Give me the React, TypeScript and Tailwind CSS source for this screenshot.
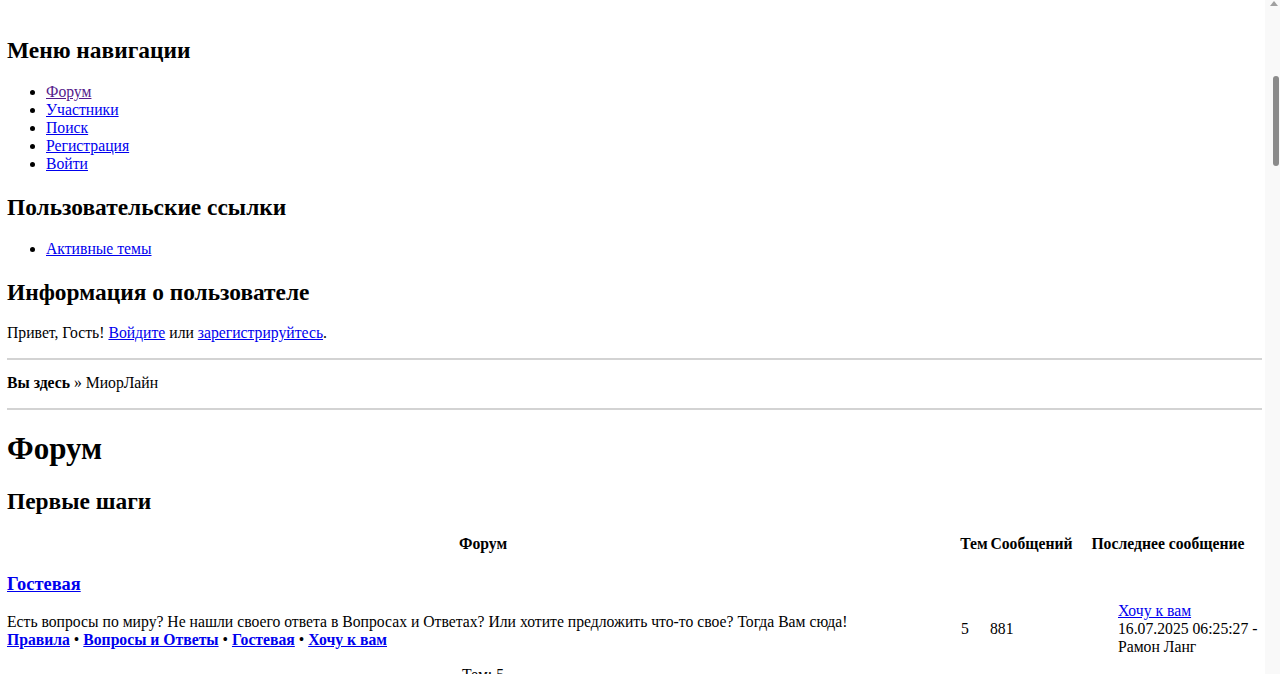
const link = "text-[#0000ee] underline"

const navLinks = [
    { label: "Форум", visited: true },
    { label: "Участники" },
    { label: "Поиск" },
    { label: "Регистрация" },
    { label: "Войти" },
]

const subForums = ["Правила", "Вопросы и Ответы", "Гостевая", "Хочу к вам"]

const heading = "text-[23.4px] leading-[27px] font-bold"

// browser scrollbar as it looks in the screenshot
const FakeScrollbar = () => (
    <div aria-hidden className="fixed top-0 right-0 w-[15px] h-full bg-[#f9f9f9]">
        <div className="absolute top-[1px] right-[2px] w-0 h-0 border-l-[4px] border-r-[4px] border-b-[5px] border-l-transparent border-r-transparent border-b-[#a0a0a0]" />
        <div className="absolute top-[76px] right-[1px] w-[6px] h-[90px] rounded-full bg-[#8b8b8b]" />
    </div>
)

export default function App() {
    return (
        <div className="font-['Liberation_Serif','Times_New_Roman',serif] text-[15.7px] leading-[18px] text-black bg-white pl-[7px] pr-[18px] pt-[37px]">
            <h2 className={`${heading} mb-[19px]`}>Меню навигации</h2>
            <ul className="list-disc pl-[39px] mb-[21px]">
                {navLinks.map((item) => (
                    <li key={item.label}>
                        <a href="#" className={item.visited ? "text-[#551a8b] underline" : link}>{item.label}</a>
                    </li>
                ))}
            </ul>

            <h2 className={`${heading} mb-[19px]`}>Пользовательские ссылки</h2>
            <ul className="list-disc pl-[39px] mb-[21px]">
                <li><a href="#" className={link}>Активные темы</a></li>
            </ul>

            <h2 className={`${heading} mb-[18px]`}>Информация о пользователе</h2>
            <p>
                Привет, Гость! <a href="#" className={link}>Войдите</a> или <a href="#" className={link}>зарегистрируйтесь</a>.
            </p>

            <div className="h-[2px] bg-[#d3d3d3] mt-4 mb-[14px]" />
            <p><strong>Вы здесь</strong> » МиорЛайн</p>
            <div className="h-[2px] bg-[#d3d3d3] mt-4" />

            <h1 className="text-[31px] leading-[36px] font-bold mt-[21px] mb-[21px]">Форум</h1>
            <h2 className={`${heading} mb-[20px]`}>Первые шаги</h2>

            <table className="w-full table-fixed border-collapse">
                <colgroup>
                    <col />
                    <col className="w-[30px]" />
                    <col className="w-[85px]" />
                    <col className="w-[188px]" />
                </colgroup>
                <thead>
                    <tr>
                        <th className="font-bold text-center p-0">Форум</th>
                        <th className="font-bold text-center p-0">Тем</th>
                        <th className="font-bold text-center p-0 whitespace-nowrap">Сообщений</th>
                        <th className="font-bold text-center p-0 whitespace-nowrap">Последнее сообщение</th>
                    </tr>
                </thead>
                <tbody>
                    <tr>
                        <td className="p-0 align-middle">
                            <h3 className="text-[18.4px] leading-[22px] font-bold mt-[20px] mb-[18px]">
                                <a href="#" className={link}>Гостевая</a>
                            </h3>
                            <div>Есть вопросы по миру? Не нашли своего ответа в Вопросах и Ответах? Или хотите предложить что-то свое? Тогда Вам сюда!</div>
                            <div>
                                {subForums.map((name, i) => (
                                    <span key={name}>
                                        {i > 0 && " • "}
                                        <a href="#" className={link}><strong>{name}</strong></a>
                                    </span>
                                ))}
                            </div>
                            <div className="text-center mt-[17px] mb-[3px]">
                                <div>Тем: 5</div>
                                <div>Сообщений: 881</div>
                            </div>
                        </td>
                        <td className="p-0 pl-[2px] align-middle">5</td>
                        <td className="p-0 pl-[1px] align-middle">881</td>
                        <td className="p-0 pl-[44px] align-middle">
                            <a href="#" className={link}>Хочу к вам</a>
                            <br />
                            16.07.2025 06:25:27 - Рамон Ланг
                        </td>
                    </tr>
                </tbody>
            </table>
            <FakeScrollbar />
        </div>
    )
}
